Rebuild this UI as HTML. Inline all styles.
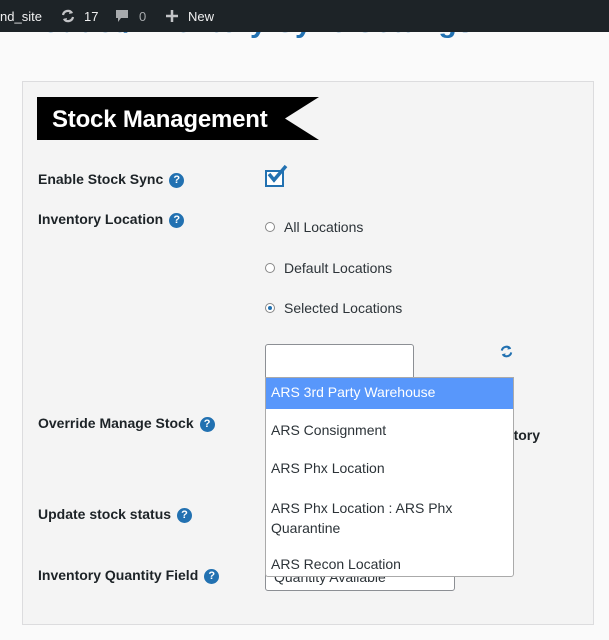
<!DOCTYPE html>
<html><head><style>
*{margin:0;padding:0;box-sizing:border-box}
body{width:609px;height:640px;background:#fafafa;font-family:"Liberation Sans",sans-serif;position:relative;overflow:hidden;color:#1d2327}
.a{position:absolute}
.bar{left:0;top:0;width:609px;height:32px;background:#1d2327;color:#f0f0f1;font-size:13px}
.lbl{font-weight:bold;font-size:14px;left:38px}
.q{display:inline-block;width:15px;height:15px;border-radius:50%;background:#2271b1;color:#fff;font-size:11px;text-align:center;line-height:15px;vertical-align:1px;margin-left:6px;font-weight:bold}
.rad{left:265px;width:10px;height:10px;border:1px solid #888;border-radius:50%;background:#fff}
.rt{left:284px;font-size:14px;color:#2c3338}
.opt{left:271px;font-size:14px;color:#2c3338}
</style></head><body>
<div class="a" style="left:10px;top:6px;font-size:30px;font-weight:bold;color:#2271b1;white-space:nowrap">Product/Inventory Sync Settings</div>
<div class="a bar">
 <span class="a" style="left:0;top:9px">nd_site</span>
 <svg class="a" style="left:60px;top:8px" width="16" height="16" viewBox="0 0 16 16"><path d="M3 7a5 5 0 0 1 9-2M13 9a5 5 0 0 1-9 2" stroke="#c3c4c7" stroke-width="2.2" fill="none"/><path d="M10 2l3 3-4 1zM6 14l-3-3 4-1z" fill="#c3c4c7"/></svg>
 <span class="a" style="left:84px;top:9px">17</span>
 <svg class="a" style="left:115px;top:9px" width="14" height="15" viewBox="0 0 14 15"><path d="M1 1h12v8H6l-3 4V9H1z" fill="#a7aaad"/></svg>
 <span class="a" style="left:139px;top:9px;color:#a7aaad">0</span>
 <svg class="a" style="left:165px;top:9px" width="14" height="14"><path d="M7 1v12M1 7h12" stroke="#c3c4c7" stroke-width="2.5"/></svg>
 <span class="a" style="left:188px;top:9px">New</span>
</div>
<div class="a" style="left:22px;top:81px;width:572px;height:544px;background:#f4f4f4;border:1px solid #dcdcde"></div>
<svg class="a" style="left:37px;top:97px" width="282" height="43"><path d="M0 0H282L248 21.5 282 43H0z" fill="#000"/></svg>
<div class="a" style="left:52px;top:106px;font-size:24px;color:#fff;font-weight:bold;letter-spacing:-0.2px">Stock Management</div>
<div class="a lbl" style="top:171px">Enable Stock Sync<span class="q">?</span></div>
<div class="a" style="left:265px;top:170px;width:19px;height:17px;border:2px solid #2271b1;background:#fff"></div>
<svg class="a" style="left:266px;top:164px" width="22" height="20"><path d="M3 10l5 6L20 2" stroke="#2271b1" stroke-width="3.5" fill="none"/></svg>
<div class="a lbl" style="top:211px">Inventory Location<span class="q">?</span></div>
<div class="a rad" style="top:222px"></div><div class="a rt" style="top:219px">All Locations</div>
<div class="a rad" style="top:263px"></div><div class="a rt" style="top:260px">Default Locations</div>
<div class="a rad" style="top:303px"></div><div class="a" style="left:268px;top:306px;width:4px;height:4px;border-radius:50%;background:#2271b1"></div><div class="a rt" style="top:300px">Selected Locations</div>
<div class="a" style="left:265px;top:344px;width:149px;height:40px;background:#fff;border:1px solid #8c8f94;border-radius:3px"></div>
<svg class="a" style="left:499px;top:344px" width="15" height="15" viewBox="0 0 16 16"><path d="M3 7a5 5 0 0 1 9-2M13 9a5 5 0 0 1-9 2" stroke="#2271b1" stroke-width="2.2" fill="none"/><path d="M10 2l3 3-4 1zM6 14l-3-3 4-1z" fill="#2271b1"/></svg>
<div class="a lbl" style="top:415px">Override Manage Stock<span class="q">?</span></div>
<div class="a" style="left:477px;top:427px;font-weight:bold;font-size:14px">Inventory</div>
<div class="a lbl" style="top:506px">Update stock status<span class="q">?</span></div>
<div class="a lbl" style="top:567px">Inventory Quantity Field<span class="q">?</span></div>
<div class="a" style="left:265px;top:560px;width:190px;height:31px;background:#fff;border:1px solid #8c8f94;border-radius:3px;font-size:14px;padding:8px 8px;color:#2c3338">Quantity Available<span style="position:absolute;right:10px;top:6px;font-size:10px">⌄</span></div>
<div class="a" style="left:265px;top:377px;width:249px;height:200px;background:#fff;border:1px solid #aaa;border-radius:0 0 3px 3px;overflow:hidden">
 <div style="height:31px;background:#5897fb"></div>
</div>
<div class="a opt" style="top:384px;color:#fff">ARS 3rd Party Warehouse</div>
<div class="a opt" style="top:422px">ARS Consignment</div>
<div class="a opt" style="top:460px">ARS Phx Location</div>
<div class="a opt" style="top:498px;line-height:20px">ARS Phx Location : ARS Phx<br>Quarantine</div>
<div class="a opt" style="top:556px">ARS Recon Location</div>
</body></html>
